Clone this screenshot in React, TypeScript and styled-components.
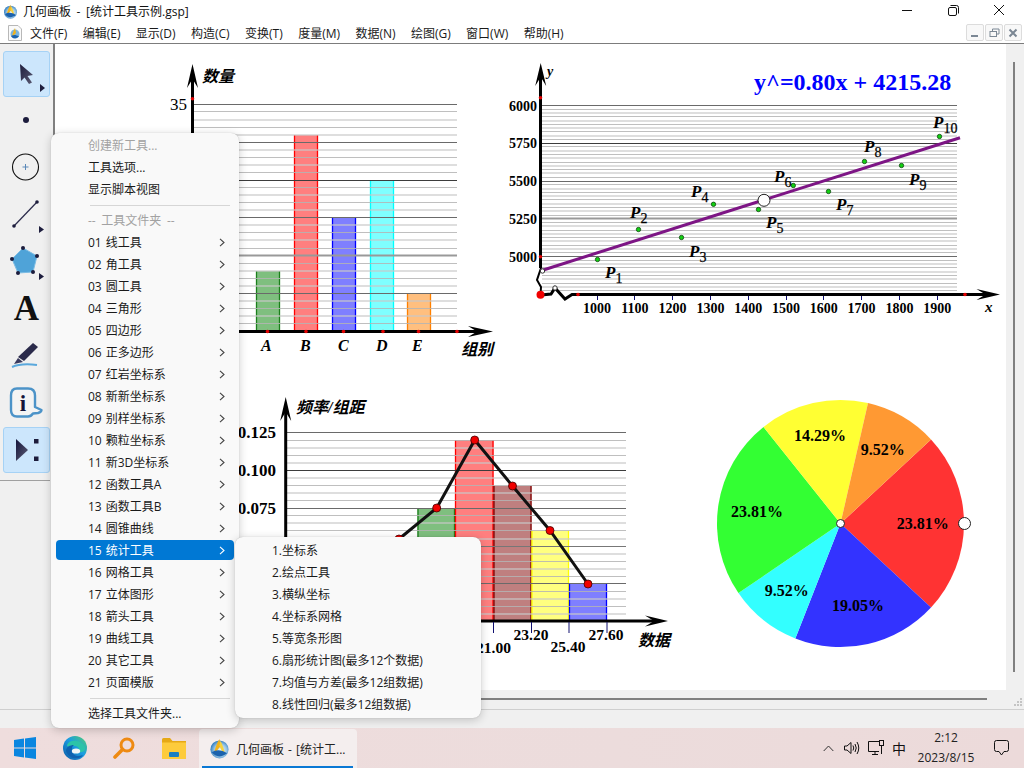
import React from 'react';
import styled, { createGlobalStyle } from 'styled-components';

const UI = `"Open Sans", "Noto Sans CJK SC", sans-serif`;
const SERIF = `"Liberation Serif", "Noto Sans CJK SC", serif`;

const Global = createGlobalStyle`
  html, body { margin: 0; padding: 0; background: #f0f0f0; }
  #root { width: 1024px; height: 768px; overflow: hidden; }
  * { box-sizing: border-box; }
`;

const Screen = styled.div`
  position: relative; width: 1024px; height: 768px; display: flex; flex-direction: column;
  font: 12px ${UI}; color: #1a1a1a; background: #f0f0f0; overflow: hidden;
`;
const TitleBar = styled.div`
  height: 23px; flex: none; background: #fff; display: flex; align-items: center;
  padding-left: 3px; padding-bottom: 1px; gap: 5px;
`;
const TitleText = styled.span`flex: 1; font-size: 12px; white-space: pre; word-spacing: 2.5px; color: #111;`;
const WinControls = styled.div`display: flex; height: 20px; align-self: flex-start; margin-right: 2px;`;
const WinButton = styled.div`width: 46px; height: 20px; display: flex; align-items: center; justify-content: center;`;
const MenuBar = styled.div`
  height: 20px; flex: none; background: #fff; display: flex; align-items: center; padding-left: 8px;
`;
const MenuItems = styled.div`display: flex; flex: 1; gap: 15.4px; margin-left: 8px; white-space: nowrap;`;
const MdiButtons = styled.div`display: flex; gap: 1px; margin-right: 2px; align-self: flex-start; margin-top: 1px;`;
const MdiButton = styled.div`
  width: 18px; height: 17px; border: 1px solid #dcdcdc; border-radius: 2px; background: #f8f8f8;
  display: flex; align-items: center; justify-content: center;
`;
const Workspace = styled.div`flex: 1; display: flex; min-height: 0; border-top: 1px solid #7c7c7c; background: #f0f0f0;`;
const Toolbar = styled.div`
  width: 55px; flex: none; border-right: 2px solid #808080; display: flex; flex-direction: column;
  padding: 7px 0 0 3px; gap: 1px; background: #f0f0f0;
`;
const ToolButton = styled.div<{ $active?: boolean }>`
  width: 47px; height: 46px; flex: none; border-radius: 3px; display: flex; align-items: center; justify-content: center;
  border: 1px solid ${p => (p.$active ? '#a6d2f5' : 'transparent')};
  background: ${p => (p.$active ? '#cce6fc' : 'transparent')};
  & > svg { margin: -1px; flex: none; }
`;
const ToolLetter = styled.span`font: bold 35px ${SERIF}; color: #111; line-height: 46px;`;
const ToolDivider = styled.div`height: 1px; width: 50px; margin: 6px 0 0 -3px; background: #a0a0a0;`;
const CenterColumn = styled.div`flex: 1; display: flex; flex-direction: column; min-width: 0;`;
const Canvas = styled.svg`display: block; width: 951px; height: 646px; background: #fff; flex: none;`;
const HScroll = styled.div`flex: 1; display: flex; align-items: center; padding: 0 19px 1px 4px;`;
const HThumb = styled.div`height: 2px; flex: 1; background: #808080;`;
const VScroll = styled.div`
  position: relative; width: 18px; flex: none; padding: 18px 0 0 7px;
`;
const VThumb = styled.div`width: 2px; height: 610px; background: #808080;`;
const Grip = styled.svg`position: absolute; right: 2px; bottom: 3px;`;
const StatusBar = styled.div`
  height: 19px; flex: none; border-top: 1px solid #cfcfcf; background: #f0f0f0;
`;
const Taskbar = styled.div`
  height: 40px; flex: none; display: flex; align-items: stretch; background: linear-gradient(90deg, #efdddd, #ecdcdc 60%, #ecdada);
`;
const PinnedApps = styled.div`display: grid; grid-template-columns: repeat(4, 49.75px); flex: none;`;
const PinnedSlot = styled.div`display: flex; align-items: center; justify-content: center;`;
const ActiveTask = styled.div`
  position: relative; width: 158px; margin: 1px 0 0; background: #f4eeee; border-radius: 4px 4px 0 0;
  display: flex; align-items: center; gap: 6px; padding-left: 10px; font-size: 12px; white-space: pre; word-spacing: 1px; color: #222;
  &::after { content: ''; position: absolute; left: 3px; right: 4px; bottom: 0; height: 2px; background: #0a78d4; }
`;
const Tray = styled.div`margin-left: auto; display: flex; align-items: center;`;
const TrayItem = styled.div<{ $w: number }>`
  width: ${p => p.$w}px; display: flex; align-items: center; justify-content: center; font-size: 14px; color: #111;
`;
const Clock = styled.div`
  width: 64px; margin-left: 4px; text-align: center; font-size: 12px; line-height: 20px; color: #222;
`;
const Menu = styled.div`
  position: absolute; left: 51px; top: 133px; width: 188px; height: 595px; padding: 1px 0 3px;
  background: #f9f9f9; border-radius: 8px;
  box-shadow: 0 2px 10px rgba(0,0,0,.2), 0 0 1px rgba(0,0,0,.25); display: flex; flex-direction: column;
`;
const SubMenu = styled(Menu)`
  left: 235px; top: 537px; width: 246px; height: 181px; padding: 2px 0 0;
`;
const MenuRow = styled.div<{ $hot?: boolean; $off?: boolean }>`
  height: 20px; margin: 1px 5px; flex: none; display: flex; align-items: center; justify-content: space-between;
  padding: 0 9px 0 32px; border-radius: 4px; white-space: pre;
  background: ${p => (p.$hot ? '#0078d4' : 'transparent')};
  color: ${p => (p.$hot ? '#fff' : p.$off ? '#a2a2a2' : '#1a1a1a')};
`;
const RowNum = styled.span`margin-right: 4px;`;
const RowLabel = styled.span``;
const HeadingLabel = styled.span`word-spacing: 2.5px;`;
const MenuSep = styled.div`height: 9px; flex: none; position: relative; &::after { content: ''; position: absolute; left: 39px; right: 9px; top: 5px; height: 1px; background: #d6d6d6; }`;

const AxisText = styled.text<{ $s?: number; $b?: boolean; $i?: boolean; $c?: string }>`
  font-family: ${SERIF}; font-size: ${p => p.$s ?? 16}px; font-weight: ${p => (p.$b ? 'bold' : 'normal')};
  font-style: ${p => (p.$i ? 'italic' : 'normal')}; fill: ${p => p.$c ?? '#000'};
`;
const SubText = styled.tspan`font-size: 14px; font-style: normal; font-weight: normal; stroke: #000; stroke-width: 0.25px;`;

const snap = (y: number) => Math.floor(y) + 0.5;

function Grid({ x1, x2, top, majors, subs = 5, step = 7.56 }: { x1: number; x2: number; top: number; majors: string[]; subs?: number; step?: number }) {
  const lines = [];
  const n = majors.length * subs;
  for (let i = 0; i < n; i++) {
    const y = top + i * step;
    if (i % subs === 0) {
      const c = majors[i / subs];
      lines.push(<line key={i} x1={x1} x2={x2} y1={snap(y)} y2={snap(y)} stroke={c} strokeWidth={c === '#999' ? 2 : 1} />);
    } else if (i % 2 === 0) {
      lines.push(<line key={i} x1={x1} x2={x2} y1={Math.round(y)} y2={Math.round(y)} stroke="rgba(200,200,200,.6)" strokeWidth={2} />);
    } else {
      lines.push(<line key={i} x1={x1} x2={x2} y1={snap(y)} y2={snap(y)} stroke="rgba(180,180,180,.85)" strokeWidth={1} />);
    }
  }
  return <g>{lines}</g>;
}

function Bar({ x1, x2, top, bottom, c, fill }: { x1: number; x2: number; top: number; bottom: number; c: string; fill: string }) {
  return (
    <g>
      <rect x={x1} y={top} width={x2 - x1} height={bottom - top} fill={fill} />
      <line x1={x1 + 0.5} x2={x1 + 0.5} y1={top} y2={bottom} stroke={c} strokeWidth={1.3} />
      <line x1={x2 - 0.5} x2={x2 - 0.5} y1={top} y2={bottom} stroke={c} strokeWidth={1.3} />
    </g>
  );
}

const ArrowUp = ({ x, tip, base }: { x: number; tip: number; base: number }) => (
  <path d={`M${x} ${tip} L${x + 5.5} ${base} L${x} ${base - 9} L${x - 5.5} ${base} Z`} fill="#000" />
);
const ArrowRight = ({ y, tip, base }: { y: number; tip: number; base: number }) => (
  <path d={`M${tip} ${y} L${base} ${y + 5.5} L${base + 9} ${y} L${base} ${y - 5.5} Z`} fill="#000" />
);
const RedDot = ({ x, y, r = 1.8 }: { x: number; y: number; r?: number }) => <circle cx={x} cy={y} r={r} fill="#e00000" />;

const BarChart = () => (
  <g>
    <Bar x1={256} x2={280} top={271} bottom={331} c="#1b7f1b" fill="rgba(0,128,0,.5)" />
    <Bar x1={294} x2={318} top={135} bottom={331} c="#ff0000" fill="rgba(255,0,0,.5)" />
    <Bar x1={332} x2={356} top={218} bottom={331} c="#0000ff" fill="rgba(0,0,255,.5)" />
    <Bar x1={370} x2={394} top={181} bottom={331} c="#00ffff" fill="rgba(0,255,255,.5)" />
    <Bar x1={407} x2={431} top={294} bottom={331} c="#ff8000" fill="rgba(255,128,0,.5)" />
    <Grid x1={193} x2={457} top={104.4} majors={['#6a6a6a', '#6a6a6a', '#3c3c3c', '#6a6a6a', '#999', '#6a6a6a']} />
    <line x1={192.5} x2={192.5} y1={75} y2={331} stroke="#000" strokeWidth={3} />
    <line x1={190} x2={482} y1={331.5} y2={331.5} stroke="#000" strokeWidth={3} />
    <ArrowUp x={192.5} tip={64} base={88} />
    <ArrowRight y={331.5} tip={493} base={468} />
    <RedDot x={192.5} y={98.7} />
    {[267.5, 306, 343.5, 383, 418.5, 457].map(x => <RedDot key={x} x={x} y={331.5} />)}
    <AxisText x={170} y={110} $s={17}>35</AxisText>
    <AxisText x={202} y={82} $s={16} $b $i>数量</AxisText>
    <AxisText x={461} y={355} $s={16} $b $i>组别</AxisText>
    {[['A', 261], ['B', 300], ['C', 338], ['D', 376], ['E', 412]].map(([t, x]) => (
      <AxisText key={t as string} x={x as number} y={351} $s={16} $b $i>{t}</AxisText>
    ))}
  </g>
);

const pts: [number, number, number, number, string][] = [
  [597.5, 259.5, 605, 278, '1'], [638.5, 229.5, 630, 218, '2'], [681.5, 237.5, 689, 257, '3'],
  [713.5, 204.3, 691, 197, '4'], [758.5, 209.5, 766, 228, '5'], [793.3, 185.5, 774, 182, '6'],
  [828.5, 191.5, 836, 210, '7'], [864.5, 161.5, 864, 152, '8'], [901.5, 165.5, 909, 185, '9'],
  [939.5, 136.5, 933, 128, '10'],
];

const Regression = () => (
  <g>
    <Grid x1={542} x2={957} top={105.4} subs={10} step={3.78} majors={['#6a6a6a', '#3c3c3c', '#6a6a6a', '#999', '#6a6a6a']} />
    <line x1={540.5} x2={540.5} y1={75} y2={268} stroke="#000" strokeWidth={3} />
    <path d="M541 268 L537 280 L541 287 L540.5 295" fill="none" stroke="#000" strokeWidth={2} />
    <path d="M541 295 L551 294 L555 288 L565 299 L572 294.5 L990 294.5" fill="none" stroke="#000" strokeWidth={3} />
    {[1000, 1100, 1200, 1300, 1400, 1500, 1600, 1700, 1800, 1900].map((v, i) => (
      <line key={v} x1={snap(597 + i * 37.8)} x2={snap(597 + i * 37.8)} y1={296} y2={300} stroke="#101070" />
    ))}
    <ArrowUp x={540.7} tip={63} base={86} />
    <ArrowRight y={294.5} tip={1000} base={976.5} />
    <line x1={541} y1={270.7} x2={960} y2={137.7} stroke="#7d1585" strokeWidth={3} />
    <circle cx={542.5} cy={271} r={2.2} fill="#fff" stroke="#333" />
    <circle cx={555} cy={288} r={2.2} fill="#fff" stroke="#333" />
    <circle cx={764} cy={200.3} r={6} fill="#fff" stroke="#222" />
    <RedDot x={540.5} y={97.7} />
    <RedDot x={540.5} y={256.7} />
    <RedDot x={578} y={294.5} />
    <RedDot x={965} y={294.5} />
    <circle cx={540.5} cy={294.7} r={4} fill="#f00000" />
    {[6000, 5750, 5500, 5250, 5000].map((v, i) => (
      <AxisText key={v} x={537} y={110.5 + i * 37.8} $s={14} $b textAnchor="end">{v}</AxisText>
    ))}
    {[1000, 1100, 1200, 1300, 1400, 1500, 1600, 1700, 1800, 1900].map((v, i) => (
      <AxisText key={v} x={597 + i * 37.8} y={313} $s={14} $b textAnchor="middle">{v}</AxisText>
    ))}
    {pts.map(([x, y, lx, ly, n]) => (
      <g key={n}>
        <circle cx={x} cy={y} r={2.2} fill="#12d012" stroke="#124412" strokeWidth={0.8} />
        <AxisText x={lx} y={ly} $s={17} $b $i>P<SubText dy={5}>{n}</SubText></AxisText>
      </g>
    ))}
    <AxisText x={547} y={76} $s={14} $b $i>y</AxisText>
    <AxisText x={985} y={312} $s={15} $b $i>x</AxisText>
    <AxisText x={754} y={90} $s={24} $b $c="#0000ff">y^=0.80x + 4215.28</AxisText>
  </g>
);

const Histogram = () => (
  <g>
    <Bar x1={417.5} x2={455} top={508} bottom={620} c="#1b7f1b" fill="rgba(0,128,0,.5)" />
    <Bar x1={455} x2={493.5} top={440} bottom={620} c="#ff0000" fill="rgba(255,0,0,.5)" />
    <Bar x1={493.5} x2={531.5} top={486} bottom={620} c="#800000" fill="rgba(128,0,0,.5)" />
    <Bar x1={531.5} x2={569} top={531} bottom={620} c="#ffff00" fill="rgba(255,255,0,.5)" />
    <Bar x1={569} x2={607} top={584} bottom={620} c="#0000ff" fill="rgba(0,0,255,.5)" />
    <Grid x1={287} x2={626} top={432.7} majors={['#6a6a6a', '#3c3c3c', '#6a6a6a', '#777', '#6a6a6a']} />
    <line x1={285.7} x2={285.7} y1={408} y2={622} stroke="#000" strokeWidth={3} />
    <line x1={284} x2={655} y1={621} y2={621} stroke="#000" strokeWidth={3} />
    <ArrowUp x={285.7} tip={397} base={421} />
    <ArrowRight y={621} tip={668} base={645} />
    {[493.5, 531.5, 569, 607].map(x => <line key={x} x1={x} x2={x} y1={622} y2={633} stroke="#101070" strokeWidth={1} />)}
    <polyline points="399,539 436.7,508 474.7,440 512.5,486 550,530.5 588,584" fill="none" stroke="#111" strokeWidth={3} />
    {[[399, 539], [436.7, 508], [474.7, 440], [512.5, 486], [550, 530.5], [588, 584]].map(([x, y]) => (
      <circle key={x} cx={x} cy={y} r={4} fill="#f00000" stroke="#400" strokeWidth={0.8} />
    ))}
    {[['0.125', 438], ['0.100', 476], ['0.075', 514]].map(([t, y]) => (
      <AxisText key={t as string} x={276} y={y as number} $s={17} $b textAnchor="end">{t}</AxisText>
    ))}
    <AxisText x={296} y={413} $s={16} $b $i>频率/组距</AxisText>
    <AxisText x={638} y={646} $s={16} $b $i>数据</AxisText>
    <AxisText x={493.5} y={653} $s={15.5} $b textAnchor="middle">21.00</AxisText>
    <AxisText x={531} y={640} $s={15.5} $b textAnchor="middle">23.20</AxisText>
    <AxisText x={568} y={652} $s={15.5} $b textAnchor="middle">25.40</AxisText>
    <AxisText x={606} y={640} $s={15.5} $b textAnchor="middle">27.60</AxisText>
  </g>
);

const slices: [number, string][] = [
  [23.81, '#ff3333'], [19.05, '#3333ff'], [9.52, '#33ffff'], [23.81, '#33ff33'], [14.29, '#ffff33'], [9.52, '#ff9933'],
];
const Pie = () => {
  const cx = 840.5, cy = 523.5, r = 123.5;
  let a = -42.86;
  return (
    <g>
      {slices.map(([p, c]) => {
        const d = (p / 100) * 360;
        const p1 = [cx + r * Math.cos((a * Math.PI) / 180), cy + r * Math.sin((a * Math.PI) / 180)];
        const p2 = [cx + r * Math.cos(((a + d) * Math.PI) / 180), cy + r * Math.sin(((a + d) * Math.PI) / 180)];
        a += d;
        return <path key={c} d={`M${cx} ${cy} L${p1[0]} ${p1[1]} A${r} ${r} 0 0 1 ${p2[0]} ${p2[1]} Z`} fill={c} />;
      })}
      {[['14.29%', 820, 441], ['9.52%', 882.7, 455], ['23.81%', 757, 517], ['23.81%', 922.7, 529], ['9.52%', 786.7, 596], ['19.05%', 858, 611]].map(([t, x, y]) => (
        <AxisText key={`${t}${x}`} x={x as number} y={y as number} $s={16} $b textAnchor="middle">{t}</AxisText>
      ))}
      <circle cx={cx} cy={cy} r={4} fill="#fff" stroke="#222" />
      <circle cx={964.5} cy={cy} r={6} fill="#fff" stroke="#222" />
    </g>
  );
};

const Logo = ({ size, id }: { size: number; id: string }) => (
  <svg width={size} height={size} viewBox="0 0 22 22">
    <defs>
      <radialGradient id={id} cx="55%" cy="55%" r="60%">
        <stop offset="0" stopColor="#f4f8fc" />
        <stop offset="0.55" stopColor="#9cc8e8" />
        <stop offset="1" stopColor="#1d6fb8" />
      </radialGradient>
    </defs>
    <circle cx="11" cy="12" r="9.5" fill={`url(#${id})`} />
    <path d="M11 1 C8 6 6 11 5 18 C8 14 10 11 12 9 Z" fill="#f2b21a" />
    <path d="M12 3 C14 7 16 12 17 18 C14 15 12 11 11 8 Z" fill="#f7d23c" />
    <path d="M3 15 C7 12 13 12 19 16 C14 20 7 21 3 15 Z" fill="#1b62ad" />
  </svg>
);

const Chevron = ({ c }: { c?: string }) => (
  <svg width="6" height="9" viewBox="0 0 6 9"><path d="M1 .8 L5 4.5 L1 8.2" fill="none" stroke={c ?? '#444'} strokeWidth="1.1" /></svg>
);

const SubArrow = () => <path d="M36 34 L41 37.5 L36 41 Z" fill="#1e1e3e" />;

const folders = ['线工具', '角工具', '圆工具', '三角形', '四边形', '正多边形', '红岩坐标系', '新新坐标系', '别样坐标系', '颗粒坐标系', '新3D坐标系', '函数工具A', '函数工具B', '圆锥曲线', '统计工具', '网格工具', '立体图形', '箭头工具', '曲线工具', '其它工具', '页面模版'];
const subItems = ['1.坐标系', '2.绘点工具', '3.横纵坐标', '4.坐标系网格', '5.等宽条形图', '6.扇形统计图(最多12个数据)', '7.均值与方差(最多12组数据)', '8.线性回归(最多12组数据)'];
const menus = ['文件(F)', '编辑(E)', '显示(D)', '构造(C)', '变换(T)', '度量(M)', '数据(N)', '绘图(G)', '窗口(W)', '帮助(H)'];

export default function App() {
  return (
    <Screen>
      <Global />
      <TitleBar>
        <Logo size={15} id="lg1" />
        <TitleText>几何画板 - [统计工具示例.gsp]</TitleText>
        <WinControls>
          <WinButton><svg width="10" height="10"><line x1="0" x2="10" y1="5.5" y2="5.5" stroke="#111" /></svg></WinButton>
          <WinButton><svg width="11" height="11"><rect x=".5" y="2.5" width="8" height="8" rx="1.5" fill="none" stroke="#111" /><path d="M2.5 .5 H8.5 Q10.5 .5 10.5 2.5 V8.5" fill="none" stroke="#111" /></svg></WinButton>
          <WinButton><svg width="10" height="10"><path d="M0 0 L10 10 M10 0 L0 10" stroke="#111" strokeWidth="1" /></svg></WinButton>
        </WinControls>
      </TitleBar>
      <MenuBar>
        <svg width="14" height="16" viewBox="0 0 14 16">
          <path d="M.5 .5 H10 L13.5 4 V15.5 H.5 Z" fill="#fafafa" stroke="#b8b8b8" />
          <circle cx="7" cy="9" r="4.5" fill="#7ab4de" />
          <path d="M7 3 C5 7 4.5 9 4 12 L8 8 Z" fill="#f2b21a" />
          <path d="M3 11 C6 9.5 8 10 11 11.5 C8 14 5 14 3 11 Z" fill="#1b62ad" />
        </svg>
        <MenuItems>{menus.map(m => <span key={m}>{m}</span>)}</MenuItems>
        <MdiButtons>
          <MdiButton><svg width="10" height="10"><rect x="1" y="7" width="7" height="2" fill="#7b8794" /></svg></MdiButton>
          <MdiButton><svg width="11" height="10"><rect x="1" y="3.5" width="6.5" height="5" fill="none" stroke="#7b8794" /><path d="M3.5 3 V1 H10 V6 H8" fill="none" stroke="#7b8794" /></svg></MdiButton>
          <MdiButton><svg width="10" height="10"><path d="M1.5 1.5 L8.5 8.5 M8.5 1.5 L1.5 8.5" stroke="#7b8794" strokeWidth="2" /></svg></MdiButton>
        </MdiButtons>
      </MenuBar>
      <Workspace>
        <Toolbar>
          <ToolButton $active>
            <svg width="47" height="46" viewBox="0 0 47 46">
              <defs><linearGradient id="arr" x1="0" y1="0" x2="1" y2="1"><stop offset="0" stopColor="#1c1c3c" /><stop offset="1" stopColor="#5a5a72" /></linearGradient></defs>
              <path d="M17 13 L30 24 L24.5 25 L29 31.5 L26 33 L21.5 26.5 L18 30 Z" fill="url(#arr)" />
              <path d="M37 33 L42 37 L37 41 Z" fill="#1e1e3e" />
            </svg>
          </ToolButton>
          <ToolButton><svg width="47" height="46" viewBox="0 0 47 46"><circle cx="23" cy="22" r="3" fill="#1c1c3c" /></svg></ToolButton>
          <ToolButton>
            <svg width="47" height="46" viewBox="0 0 47 46">
              <circle cx="22.5" cy="22" r="13" fill="none" stroke="#111" strokeWidth="1.1" />
              <path d="M22.5 19 V25 M19.5 22 H25.5" stroke="#5a88b8" strokeWidth="1" />
            </svg>
          </ToolButton>
          <ToolButton>
            <svg width="47" height="46" viewBox="0 0 47 46">
              <line x1="11" y1="34" x2="34" y2="10" stroke="#2a2a4a" strokeWidth="1.2" />
              <circle cx="11" cy="34" r="1.8" fill="#1c1c3c" /><circle cx="34" cy="10" r="1.8" fill="#1c1c3c" />
              <SubArrow />
            </svg>
          </ToolButton>
          <ToolButton>
            <svg width="47" height="46" viewBox="0 0 47 46">
              <path d="M20 9 L34 17 L30 33 L15 34 L9 20 Z" fill="#4fa3d8" stroke="#7cbce4" />
              {[[20, 9], [34, 17], [30, 33], [15, 34], [9, 20]].map(([x, y]) => <circle key={x} cx={x} cy={y} r="2" fill="#1c1c3c" />)}
              <SubArrow />
            </svg>
          </ToolButton>
          <ToolButton><ToolLetter>A</ToolLetter></ToolButton>
          <ToolButton>
            <svg width="47" height="46" viewBox="0 0 47 46">
              <path d="M30 10 L35 14 L21 28 L15 24 Z" fill="#2a2a4a" />
              <path d="M15 25 L20 29 L11 31 Z" fill="#3a3a5e" />
              <path d="M9 34 Q18 30 34 32" fill="none" stroke="#5aa8dc" strokeWidth="2" />
            </svg>
          </ToolButton>
          <ToolButton>
            <svg width="47" height="46" viewBox="0 0 47 46">
              <path d="M14 8.5 H25 Q32 8.5 32 15.5 V27 L38.5 30 Q38.5 32 35 33 L30 33.5 Q28 36.5 25 36.5 H14 Q8 36.5 8 30 V15.5 Q8 8.5 14 8.5 Z" fill="#f4f4f4" stroke="#4c93c8" strokeWidth="2.4" strokeLinejoin="round" />
              <AxisText x="20" y="31" $s={23} $b textAnchor="middle" $c="#14143a">i</AxisText>
            </svg>
          </ToolButton>
          <ToolButton $active>
            <svg width="47" height="46" viewBox="0 0 47 46">
              <defs><linearGradient id="tri" x1="0" y1="0" x2="1" y2="1"><stop offset="0" stopColor="#14143a" /><stop offset="1" stopColor="#5e5e76" /></linearGradient></defs>
              <path d="M13 12 L25 23 L13 34 Z" fill="url(#tri)" />
              <rect x="31" y="12" width="4.5" height="4.5" fill="#1c1c3c" /><rect x="31" y="29.5" width="4.5" height="4.5" fill="#1c1c3c" />
            </svg>
          </ToolButton>
          <ToolDivider />
        </Toolbar>
        <CenterColumn>
          <Canvas viewBox="55 44 951 646">
            <BarChart />
            <Regression />
            <Histogram />
            <Pie />
          </Canvas>
          <HScroll><HThumb /></HScroll>
        </CenterColumn>
        <VScroll>
          <VThumb />
          <Grip width="9" height="8" viewBox="0 0 9 8">
            {[[7, 0], [4, 3], [7, 3], [1, 6], [4, 6], [7, 6]].map(([x, y]) => <rect key={`${x}-${y}`} x={x} y={y} width="2" height="2" fill="#c4c4c4" />)}
          </Grip>
        </VScroll>
      </Workspace>
      <StatusBar />
      <Taskbar>
        <PinnedApps>
          <PinnedSlot>
            <svg width="22" height="22" viewBox="0 0 22 22">
              <path d="M0 3 L10 1.6 V10.4 H0 Z M11 1.4 L22 0 V10.4 H11 Z M0 11.6 H10 V20.4 L0 19 Z M11 11.6 H22 V22 L11 20.6 Z" fill="#0a86e0" />
            </svg>
          </PinnedSlot>
          <PinnedSlot>
            <svg width="24" height="24" viewBox="0 0 24 24">
              <defs>
                <linearGradient id="edge" x1="0" y1="1" x2="1" y2="0"><stop offset="0" stopColor="#0c59a4" /><stop offset="0.55" stopColor="#1b9de2" /><stop offset="1" stopColor="#52d36a" /></linearGradient>
              </defs>
              <circle cx="12" cy="12" r="12" fill="url(#edge)" />
              <path d="M4 9 C6 3 18 3 22 11 C23 15 19 17 15 16 C17 14 16 10 12 10 C8 10 4 12 4 9 Z" fill="#2cc3a8" />
              <path d="M9 13 C8 18 13 22 20 19 C17 24 6 24 3 15 C3 11 7 9 11 9 C9 10 9 12 9 13 Z" fill="#0d62b0" />
              <ellipse cx="13" cy="15" rx="4.2" ry="2.6" fill="#eef6f6" />
            </svg>
          </PinnedSlot>
          <PinnedSlot>
            <svg width="24" height="22" viewBox="0 0 24 22">
              <circle cx="15" cy="8" r="6" fill="none" stroke="#ee8a12" strokeWidth="3" />
              <path d="M10.5 12.5 L3 20" stroke="#ee8a12" strokeWidth="3.6" strokeLinecap="round" />
            </svg>
          </PinnedSlot>
          <PinnedSlot>
            <svg width="24" height="21" viewBox="0 0 24 21">
              <path d="M0 1.5 Q0 0 1.5 0 H8 L10.5 3 H24 V19.5 Q24 21 22.5 21 H1.5 Q0 21 0 19.5 Z" fill="#e6a916" />
              <path d="M0 4.5 H24 V19.5 Q24 21 22.5 21 H1.5 Q0 21 0 19.5 Z" fill="#fdcb3c" />
              <rect x="7" y="14" width="10" height="5" rx="1" fill="#1a7fc4" />
            </svg>
          </PinnedSlot>
        </PinnedApps>
        <ActiveTask>
          <Logo size={21} id="lg2" />
          <span>几何画板 - [统计工...</span>
        </ActiveTask>
        <Tray>
          <TrayItem $w={24}><svg width="11" height="7"><path d="M.7 6 L5.5 1 L10.3 6" fill="none" stroke="#333" /></svg></TrayItem>
          <TrayItem $w={24}>
            <svg width="17" height="14" viewBox="0 0 17 14">
              <path d="M.5 5 H3 L7 1.5 V12.5 L3 9 H.5 Z" fill="none" stroke="#111" />
              <path d="M9 4.5 Q10.5 7 9 9.5 M11 3 Q13.5 7 11 11 M13 1 Q16.5 7 13 13" fill="none" stroke="#111" />
            </svg>
          </TrayItem>
          <TrayItem $w={24}>
            <svg width="17" height="16" viewBox="0 0 17 16">
              <path d="M11 1.5 H.5 V11.5 H11" fill="none" stroke="#111" />
              <path d="M4 14.5 H10 M7 11.5 V14.5" stroke="#111" />
              <rect x="11.5" y=".5" width="4" height="5" fill="none" stroke="#111" />
              <path d="M13.5 5.5 V14" stroke="#111" />
            </svg>
          </TrayItem>
          <TrayItem $w={22}>中</TrayItem>
          <Clock><div>2:12</div><div>2023/8/15</div></Clock>
          <TrayItem $w={46}>
            <svg width="15" height="16" viewBox="0 0 15 16">
              <path d="M2.5 .5 H12.5 Q14.5 .5 14.5 2.5 V9.5 Q14.5 11.5 12.5 11.5 H10 L7.5 15 L5 11.5 H2.5 Q.5 11.5 .5 9.5 V2.5 Q.5 .5 2.5 .5 Z" fill="none" stroke="#111" />
            </svg>
          </TrayItem>
        </Tray>
      </Taskbar>
      <Menu>
        <MenuRow $off><RowLabel>创建新工具...</RowLabel></MenuRow>
        <MenuRow><RowLabel>工具选项...</RowLabel></MenuRow>
        <MenuRow><RowLabel>显示脚本视图</RowLabel></MenuRow>
        <MenuSep />
        <MenuRow $off><HeadingLabel>-- 工具文件夹 --</HeadingLabel></MenuRow>
        {folders.map((f, i) => (
          <MenuRow key={f} $hot={i === 14}>
            <RowLabel><RowNum>{String(i + 1).padStart(2, '0')}</RowNum>{f}</RowLabel>
            <Chevron c={i === 14 ? '#fff' : undefined} />
          </MenuRow>
        ))}
        <MenuSep />
        <MenuRow><RowLabel>选择工具文件夹...</RowLabel></MenuRow>
      </Menu>
      <SubMenu>
        {subItems.map(s => <MenuRow key={s}><RowLabel>{s}</RowLabel></MenuRow>)}
      </SubMenu>
    </Screen>
  );
}
